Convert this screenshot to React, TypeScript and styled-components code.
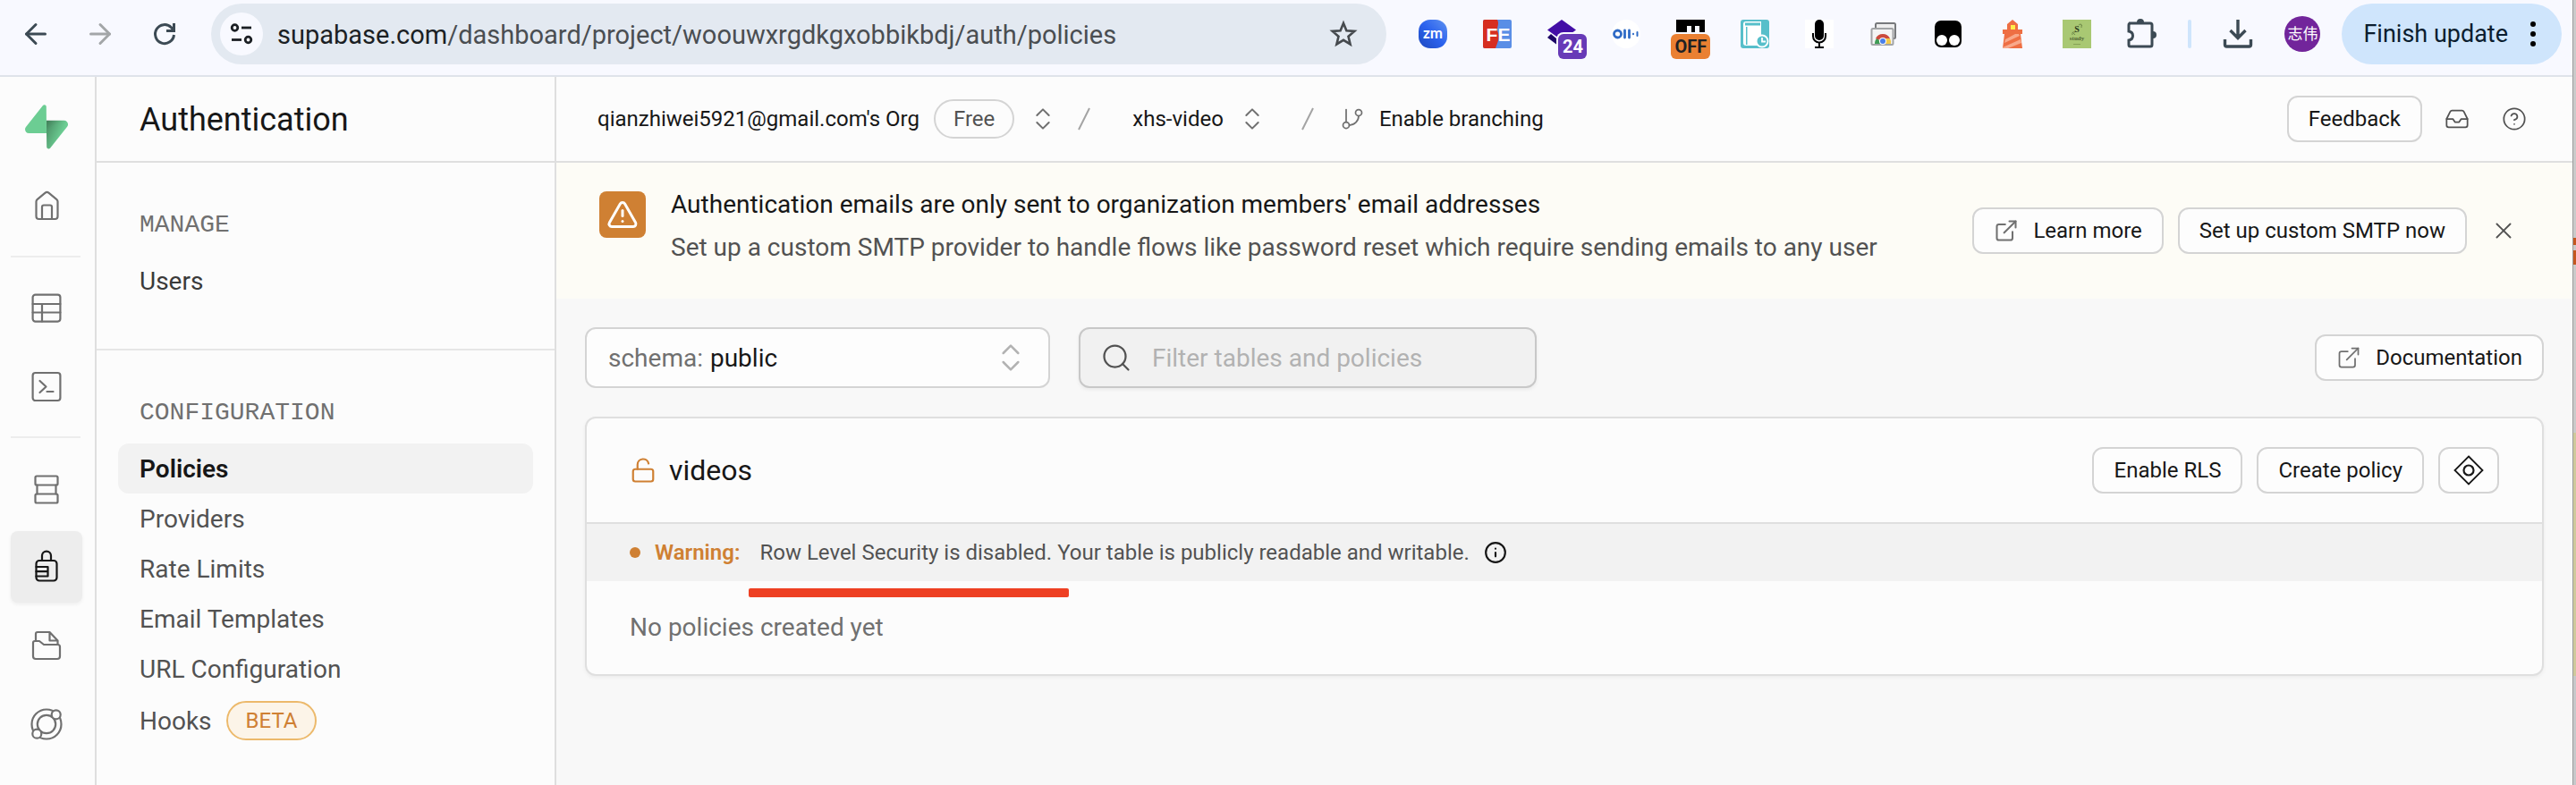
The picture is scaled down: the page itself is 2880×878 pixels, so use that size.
import React from "react";
import styled, { createGlobalStyle, css } from "styled-components";
import {
  ArrowLeft, ArrowRight, ChevronsUpDown, CircleHelp, ExternalLink, GitBranch,
  Inbox, Info, LockOpen, Search, TriangleAlert, X,
} from "lucide-react";

const c = {
  ink: "#171717",
  light: "#525252",
  lighter: "#707070",
  muted: "#b2b2b2",
  surface: "#fcfcfc",
  canvas: "#f8f8f8",
  selected: "#f2f2f2",
  line: "#dfdfdf",
  control: "#d4d4d4",
  warn: "#cf8033",
  chrome: "#f8f9ff",
  chromeInk: "#3c4a54",
};

const Global = createGlobalStyle`
  *, *::before, *::after { box-sizing: border-box; }
  body { margin: 0; background: ${c.canvas}; }
  body, button, input, select {
    font-family: Roboto, "Noto Sans CJK SC", sans-serif;
    font-size: 24px;
    color: ${c.ink};
  }
  button, input, select { margin: 0; padding: 0; border: 0; background: none; }
  button { cursor: pointer; }
  a { color: inherit; text-decoration: none; }
  h1, h2, h3, p, ul { margin: 0; padding: 0; font-weight: 400; }
  ul { list-style: none; }
  svg { display: block; flex: none; }
`;

const Desktop = styled.div`
  display: flex;
  min-height: 100vh;
`;

const Window = styled.div`
  flex: 1;
  min-width: 0;
  display: flex;
  flex-direction: column;
`;

const Backdrop = styled.div`
  width: 4px;
  border-left: 1px solid #9c9c9c;
  background: linear-gradient(
    #cacaca 266px, #c4571f 266px 274px, #cacaca 274px 280px, #c4571f 280px 296px,
    #cacaca 296px 484px, #cfc99c 484px 756px, #c6c8ca 756px
  );
`;

/* ---------- Browser toolbar ---------- */

const BrowserBar = styled.header`
  display: flex;
  align-items: center;
  height: 86px;
  padding: 4px 12px 12px 4px;
  background: ${c.chrome};
  border-bottom: 2px solid #dfe3ea;
`;

const BarButton = styled.button<{ $dim?: boolean }>`
  position: relative;
  display: flex;
  align-items: center;
  justify-content: center;
  width: 72px;
  height: 68px;
  flex: none;
  color: ${(p) => (p.$dim ? "#a3a6a8" : c.chromeInk)};
`;

const AddressBar = styled.div`
  flex: 1;
  min-width: 0;
  display: flex;
  align-items: center;
  gap: 16px;
  height: 68px;
  margin: 0 16px;
  padding: 0 32px 0 10px;
  border-radius: 34px;
  background: #e3e9f1;
`;

const SiteInfo = styled.button`
  display: flex;
  align-items: center;
  justify-content: center;
  width: 48px;
  height: 48px;
  border-radius: 50%;
  background: ${c.chrome};
`;

const Url = styled.p`
  flex: 1;
  padding-top: 2px;
  font-size: 29px;
  color: #4a4e52;
  white-space: nowrap;
  overflow: hidden;
  b { font-weight: 400; color: #1b1f24; }
`;

const Badge = styled.span<{ $bg: string; $fg: string; $wide?: boolean }>`
  position: absolute;
  left: ${(p) => (p.$wide ? 14 : 32)}px;
  top: 34px;
  width: ${(p) => (p.$wide ? 44 : 32)}px;
  height: 28px;
  border-radius: 6px;
  background: ${(p) => p.$bg};
  color: ${(p) => p.$fg};
  font-size: 20px;
  font-weight: 700;
  line-height: 28px;
  text-align: center;
`;

const BarDivider = styled.span`
  width: 4px;
  height: 32px;
  margin: 0 16px;
  border-radius: 2px;
  background: #cfe5fc;
`;

const Avatar = styled.span`
  width: 40px;
  height: 40px;
  border-radius: 50%;
  background: #72259b;
  color: #fff;
  font-size: 17px;
  line-height: 40px;
  text-align: center;
`;

const FinishUpdate = styled.button`
  display: flex;
  align-items: center;
  gap: 18px;
  height: 68px;
  margin-left: 8px;
  padding: 0 22px 0 24px;
  border-radius: 34px;
  background: #cfe5fc;
  color: #0b1d2f;
  font-size: 27px;
  white-space: nowrap;
`;

/* ---------- App frame ---------- */

const Frame = styled.div`
  flex: 1;
  display: flex;
`;

const Rail = styled.nav`
  display: flex;
  flex-direction: column;
  gap: 8px;
  flex: none;
  width: 108px;
  padding: 16px 14px 16px 12px;
  border-right: 2px solid ${c.line};
  background: ${c.surface};
`;

const RailLink = styled.a<{ $active?: boolean }>`
  display: flex;
  align-items: center;
  justify-content: center;
  width: 80px;
  height: 80px;
  border-radius: 8px;
  color: ${c.lighter};
  ${(p) => p.$active && css`
    color: ${c.ink};
    background: #ededed;
    box-shadow: 0 2px 4px rgba(0, 0, 0, 0.06);
  `}
`;

const RailDivider = styled.hr`
  width: 78px;
  height: 2px;
  margin: 8px 0;
  border: 0;
  background: #ededed;
`;

const Sidebar = styled.aside`
  flex: none;
  width: 514px;
  border-right: 2px solid ${c.line};
  background: ${c.surface};
`;

const SidebarHeader = styled.div`
  display: flex;
  align-items: center;
  height: 96px;
  padding: 2px 48px 0;
  border-bottom: 2px solid ${c.line};
  h1 { font-size: 36px; }
`;

const MenuSection = styled.section`
  padding: 48px 24px;
  & + & { border-top: 2px solid #e6e6e6; }
`;

const MenuTitle = styled.h2`
  margin-bottom: 12px;
  padding: 0 24px;
  font-family: "Liberation Mono", monospace;
  font-size: 28px;
  line-height: 44px;
  color: ${c.lighter};
`;

const MenuLink = styled.a<{ $active?: boolean; $strong?: boolean; $tall?: boolean }>`
  display: flex;
  align-items: center;
  gap: 16px;
  height: ${(p) => (p.$tall ? 60 : 56)}px;
  padding: 0 24px;
  border-radius: 12px;
  font-size: 28px;
  font-weight: ${(p) => (p.$active ? 600 : 400)};
  color: ${(p) => (p.$active ? c.ink : p.$strong ? "#3a3a3a" : c.light)};
  background: ${(p) => (p.$active ? c.selected : "none")};
`;

const Pill = styled.span<{ $warn?: boolean }>`
  display: flex;
  align-items: center;
  height: 44px;
  padding: 0 20px;
  border: 2px solid ${(p) => (p.$warn ? "#ecb96b" : c.control)};
  border-radius: 22px;
  background: ${(p) => (p.$warn ? "#fcf4e8" : c.surface)};
  color: ${(p) => (p.$warn ? c.warn : c.light)};
  font-size: 24px;
`;

const Main = styled.main`
  flex: 1;
  min-width: 0;
  background: ${c.canvas};
`;

const TopBar = styled.div`
  display: flex;
  align-items: center;
  height: 96px;
  padding: 0 40px 0 46px;
  border-bottom: 2px solid ${c.line};
  background: ${c.surface};
`;

const Crumb = styled.button<{ $inset?: boolean }>`
  display: flex;
  align-items: center;
  gap: 16px;
  padding: ${(p) => (p.$inset ? "0 16px 0 18px" : "0")};
  white-space: nowrap;
  svg { color: ${c.lighter}; }
`;

const Slash = styled.svg`
  width: 32px;
  height: 32px;
  margin: 0 20px 0 14px;
  stroke: #a3a3a3;
  stroke-width: 2;
`;

const TopActions = styled.div`
  display: flex;
  align-items: center;
  gap: 14px;
  margin-left: auto;
`;

const Button = styled.button<{ $square?: boolean }>`
  display: flex;
  align-items: center;
  justify-content: center;
  gap: 16px;
  height: 52px;
  ${(p) => (p.$square ? "width: 68px;" : "padding: 0 22px;")}
  border: 2px solid ${c.control};
  border-radius: 12px;
  background: #fdfdfd;
  white-space: nowrap;
`;

const LinkButton = styled(Button).attrs({ as: "a", href: "#" })`
  svg { color: ${c.lighter}; }
`;

const GhostButton = styled.button`
  display: flex;
  align-items: center;
  justify-content: center;
  width: 50px;
  height: 52px;
  color: ${c.light};
`;

const Banner = styled.section`
  display: flex;
  align-items: center;
  gap: 28px;
  height: 152px;
  padding: 0 52px 0 48px;
  background: #fdfcf6;
`;

const BannerIcon = styled.div`
  display: flex;
  align-items: center;
  justify-content: center;
  align-self: flex-start;
  width: 52px;
  height: 52px;
  margin-top: 32px;
  border-radius: 8px;
  background: ${c.warn};
  color: #fff;
`;

const BannerText = styled.div`
  flex: 1;
  align-self: flex-start;
  padding-top: 23px;
  font-size: 28px;
  line-height: 48px;
  h2 { font-size: 28px; }
  p { color: ${c.light}; }
`;

const BannerActions = styled.div`
  display: flex;
  align-items: center;
  gap: 16px;
`;

const Content = styled.div`
  display: flex;
  flex-direction: column;
  gap: 32px;
  padding: 32px;
`;

const FilterRow = styled.div`
  display: flex;
  align-items: center;
  gap: 32px;
  & > :last-child { margin-left: auto; }
`;

const Field = styled.label<{ $search?: boolean }>`
  display: flex;
  align-items: center;
  width: ${(p) => (p.$search ? 512 : 520)}px;
  height: 68px;
  gap: ${(p) => (p.$search ? 22 : 8)}px;
  padding: 0 22px 0 ${(p) => (p.$search ? 22 : 24)}px;
  border: 2px solid ${(p) => (p.$search ? "#c8c8c8" : c.control)};
  border-radius: 12px;
  background: ${(p) => (p.$search ? "#f1f1f1" : "#fdfdfd")};
  box-shadow: ${(p) => (p.$search ? "0 2px 4px rgba(0, 0, 0, 0.06)" : "none")};
  color: ${(p) => (p.$search ? c.light : c.lighter)};
  font-size: 28px;
  select, input {
    flex: 1;
    min-width: 0;
    appearance: none;
    outline: none;
    font-size: 28px;
  }
  input::placeholder { color: ${c.muted}; opacity: 1; }
`;

const Card = styled.section`
  position: relative;
  border: 2px solid ${c.line};
  border-radius: 12px;
  background: ${c.surface};
  box-shadow: 0 2px 4px rgba(0, 0, 0, 0.05);
`;

const CardHeader = styled.div`
  display: flex;
  align-items: center;
  gap: 16px;
  height: 118px;
  padding: 0 48px;
  border-bottom: 2px solid ${c.line};
`;

const CardTitle = styled.div`
  flex: 1;
  display: flex;
  align-items: center;
  gap: 14px;
  svg { color: ${c.warn}; }
  h3 { font-size: 32px; }
`;

const CardWarning = styled.div`
  display: flex;
  align-items: center;
  gap: 16px;
  height: 64px;
  padding: 0 48px;
  background: ${c.selected};
  p { color: ${c.light}; }
  strong { margin-right: 6px; font-weight: 600; color: ${c.warn}; }
`;

const Dot = styled.span`
  width: 12px;
  height: 12px;
  border-radius: 50%;
  background: ${c.warn};
`;

const CardBody = styled.p`
  padding: 0 48px;
  font-size: 28px;
  line-height: 104px;
  color: ${c.lighter};
`;

const Underline = styled.span`
  position: absolute;
  left: 181px;
  top: 190px;
  width: 358px;
  height: 10px;
  border-radius: 2px;
  background: #ee4023;
`;

/* ---------- Drawings ---------- */

const RailIcon = ({ children }: { children: React.ReactNode }) => (
  <svg width="40" height="40" viewBox="0 0 40 40" fill="none" stroke="currentColor"
    strokeWidth="2.2" strokeLinecap="round" strokeLinejoin="round" aria-hidden>
    {children}
  </svg>
);

const Logo = () => (
  <svg width="48" height="50" viewBox="0 0 109 113" aria-hidden>
    <defs>
      <linearGradient id="bolt" x1="54" y1="55" x2="94" y2="72" gradientUnits="userSpaceOnUse">
        <stop stopColor="#4b9166" /><stop offset="1" stopColor="#6ccd93" />
      </linearGradient>
      <linearGradient id="shade" x1="36" y1="30.6" x2="54.5" y2="65" gradientUnits="userSpaceOnUse">
        <stop /><stop offset="1" stopOpacity="0" />
      </linearGradient>
    </defs>
    <path d="M63.7 110.3c-2.9 3.6-8.7 1.6-8.7-3L54 40h45.2c8.2 0 12.8 9.5 7.7 15.9z" fill="url(#bolt)" />
    <path d="M63.7 110.3c-2.9 3.6-8.7 1.6-8.7-3L54 40h45.2c8.2 0 12.8 9.5 7.7 15.9z" fill="url(#shade)" fillOpacity=".2" />
    <path d="M45.3 2.1c2.9-3.6 8.7-1.7 8.7 3l.5 67.2H9.8c-8.2 0-12.7-9.5-7.6-15.9z" fill="#6ccd93" />
  </svg>
);

const Ext = ({ children }: { children: React.ReactNode }) => (
  <svg width="32" height="32" viewBox="0 0 32 32" aria-hidden>{children}</svg>
);

const extensions: { name: string; art: React.ReactNode; badge?: React.ReactNode }[] = [
  {
    name: "Zoom",
    art: (
      <Ext>
        <defs>
          <linearGradient id="zm" x1="1" y1="0" x2="0" y2="1">
            <stop stopColor="#5f93f0" /><stop offset=".5" stopColor="#2b62ee" /><stop offset="1" stopColor="#1f49bd" />
          </linearGradient>
        </defs>
        <rect width="32" height="32" rx="13" fill="url(#zm)" />
        <text x="16" y="21" textAnchor="middle" fontFamily="Lato" fontWeight="700" fontSize="17" fill="#fff">zm</text>
      </Ext>
    ),
  },
  {
    name: "FE Helper",
    art: (
      <Ext>
        <rect width="32" height="32" rx="2" fill="#5a8ee6" />
        <path d="M2 0h14c3 6-2 9 1 15 2 6-1 11-3 17H2a2 2 0 0 1-2-2V2a2 2 0 0 1 2-2z" fill="#d62e20" />
        <text x="17" y="24" textAnchor="middle" fontFamily="Liberation Sans" fontWeight="700" fontSize="21" fill="#fff">FE</text>
      </Ext>
    ),
  },
  {
    name: "Layers",
    art: (
      <Ext>
        <path d="M0 20l4-4 12 10v6z" fill="#1d0566" />
        <path d="M16 0l16 11.500-16 11.500L0 11.500z" fill="#430ea6" />
        <path d="M10 32V22a8 8 0 0 1 8-8h14v18z" fill={c.chrome} />
      </Ext>
    ),
    badge: <Badge $bg="#673ab7" $fg="#fff">24</Badge>,
  },
  {
    name: "Audio",
    art: (
      <Ext>
        <circle cx="16" cy="16" r="16" fill="#fff" />
        <g fill="none" stroke="#2f6bc6" strokeWidth="2.800" strokeLinecap="round">
          <circle cx="6.500" cy="16" r="4" />
          <path d="M14.500 12v8M19.500 12v8" />
          <path d="M24 15.800v.400M28.500 14v4" strokeWidth="2" />
        </g>
      </Ext>
    ),
  },
  {
    name: "Switcher",
    art: (
      <Ext>
        <path d="M0 0h32v14h-6V7h-5v7h-4V7h-5v7H0z" fill="#000" />
      </Ext>
    ),
    badge: <Badge $bg="#ea8032" $fg="#202124" $wide>OFF</Badge>,
  },
  {
    name: "Reading list",
    art: (
      <Ext>
        <rect width="32" height="32" rx="3" fill="#57bfca" />
        <path d="M3 5c0-2 1-3 3-3h17v27H6c-2 0-3-1-3-3z" fill="#fff" />
        <path d="M5 3.500h17v3H5zM6 8h1.500v20H6z" fill="#57bfca" />
        <circle cx="24" cy="24" r="6.500" fill="#57bfca" stroke="#fff" strokeWidth="2" />
        <path d="M24 20v4.500h4" fill="none" stroke="#fff" strokeWidth="1.800" />
      </Ext>
    ),
  },
  {
    name: "Voice",
    art: (
      <Ext>
        <rect width="32" height="32" fill="#fff" />
        <rect x="11" y="0" width="10" height="23" rx="5" />
        <path d="M9 15v3.500a7 7 0 0 0 14 0V15M16 26v5M11 31h10" fill="none" stroke="#000" strokeWidth="2" />
      </Ext>
    ),
  },
  {
    name: "Screenshots",
    art: (
      <Ext>
        <rect x="7" y="4" width="22" height="17" rx="1.500" fill="#eee" stroke="#77797c" strokeWidth="2" />
        <rect x="2.500" y="10" width="24" height="18" rx="1.500" fill="#f4f4f4" stroke="#a2a4a6" strokeWidth="2" />
        <path d="M6 27a9 9 0 0 1 3-7l4 7z" fill="#3f9c56" />
        <path d="M7 21a9 9 0 0 1 16 0l-8 3z" fill="#cb4b3d" />
        <path d="M15 21h8a9 9 0 0 1 1 6h-9z" fill="#f2c94a" />
        <circle cx="15" cy="24" r="4" fill="#fff" />
        <circle cx="15" cy="24" r="3" fill="#4a80ea" />
      </Ext>
    ),
  },
  {
    name: "Userscripts",
    art: (
      <Ext>
        <rect x="1" y="1" width="30" height="30" rx="7" />
        <circle cx="9" cy="23" r="6" fill="#fff" />
        <circle cx="23" cy="23" r="6" fill="#fff" />
      </Ext>
    ),
  },
  {
    name: "Lighthouse",
    art: (
      <Ext>
        <path d="M16 0l6 5v6h5v5h-2l2 16H5l2-16H5v-5h5V5z" fill="#ee6f43" />
        <path d="M14 6h5v5h-5z" fill="#fff04a" />
        <path d="M8 22l11-6h4l1 2L7 26zM5 31l20-9 1 4L11 32H5z" fill="#f8a98a" />
      </Ext>
    ),
  },
  {
    name: "Study",
    art: (
      <Ext>
        <rect width="32" height="32" fill="#a9c873" />
        <path d="M18 6q4-3 3 3M20 5l2 2M11 17q-1-4 3-3M11 14l3 3" fill="none" stroke="#6f8a4a" />
        <text x="16" y="14" textAnchor="middle" fontFamily="Liberation Serif" fontWeight="700" fontSize="10" fill="#2e3a1e">S</text>
        <text x="16" y="23" textAnchor="middle" fontFamily="Liberation Serif" fontWeight="700" fontSize="7" fill="#4f6234">study</text>
        <path d="M12 27.500h8" stroke="#86a256" />
      </Ext>
    ),
  },
  {
    name: "Extensions",
    art: (
      <svg width="36" height="36" viewBox="0 0 36 36" fill="none" aria-hidden>
        <path d="M4 6h24a2 2 0 0 1 2 2v22a2 2 0 0 1-2 2H6a2 2 0 0 1-2-2v-5c6-1 6-9 0-10V8a2 2 0 0 1 2-2z" stroke={c.chromeInk} strokeWidth="3" />
        <path d="M13 5a4 4 0 0 1 8 0zM31 15a4 4 0 0 1 0 8z" fill={c.chromeInk} />
      </svg>
    ),
  },
];

export default function App() {
  return (
    <>
      <Global />
      <Desktop>
        <Window>
          <BrowserBar>
            <BarButton aria-label="Back"><ArrowLeft size={36} strokeWidth={2} /></BarButton>
            <BarButton aria-label="Forward" $dim><ArrowRight size={36} strokeWidth={2} /></BarButton>
            <BarButton aria-label="Reload">
              <svg width="32" height="32" viewBox="0 0 32 32" fill="none" stroke="currentColor" strokeWidth="3" aria-hidden>
                <path d="M26.500 17A10.500 10.500 0 1 1 23.500 8.700L26 11.500" />
                <path d="M26.500 4v8.500H18" />
              </svg>
            </BarButton>
            <AddressBar>
              <SiteInfo aria-label="Site information">
                <svg width="28" height="28" viewBox="0 0 28 28" fill="none" stroke="#1b1f24" strokeWidth="2.800" aria-hidden>
                  <circle cx="6.500" cy="7" r="3.300" /><path d="M14 7h11" />
                  <circle cx="21.500" cy="20.500" r="3.300" /><path d="M3 20.500h11" />
                </svg>
              </SiteInfo>
              <Url><b>supabase.com</b>/dashboard/project/woouwxrgdkgxobbikbdj/auth/policies</Url>
              <svg width="32" height="32" viewBox="0 0 32 32" fill="none" stroke="#45494d" strokeWidth="2.600" aria-label="Bookmark this tab">
                <path d="M16 4l3.400 8.200 8.900.700-6.800 5.800 2.100 8.700L16 22.800l-7.600 4.600 2.100-8.700-6.800-5.800 8.900-.700z" />
              </svg>
            </AddressBar>
            {extensions.map((e) => (
              <BarButton key={e.name} aria-label={e.name}>{e.art}{e.badge}</BarButton>
            ))}
            <BarDivider />
            <BarButton aria-label="Downloads">
              <svg width="36" height="36" viewBox="0 0 36 36" fill="none" stroke="currentColor" strokeWidth="3.400" aria-hidden>
                <path d="M18 2v20M9.500 14l8.500 8.500 8.500-8.500M3.500 24v6a2 2 0 0 0 2 2h25a2 2 0 0 0 2-2v-6" />
              </svg>
            </BarButton>
            <BarButton aria-label="Profile"><Avatar>志伟</Avatar></BarButton>
            <FinishUpdate>
              Finish update
              <svg width="20" height="32" viewBox="0 0 20 32" aria-hidden>
                <circle cx="10" cy="5" r="3" /><circle cx="10" cy="16" r="3" /><circle cx="10" cy="27" r="3" />
              </svg>
            </FinishUpdate>
          </BrowserBar>

          <Frame>
            <Rail aria-label="Project">
              <RailLink href="#" aria-label="Dashboard"><Logo /></RailLink>
              <RailLink href="#" aria-label="Home">
                <RailIcon>
                  <path d="M8.500 15.500V32a3 3 0 0 0 3 3h18a3 3 0 0 0 3-3V15.500a3 3 0 0 0-1.100-2.300L22.400 5.700a3 3 0 0 0-3.800 0l-9 7.500a3 3 0 0 0-1.100 2.300z" />
                  <path d="M15 35V21.500a2 2 0 0 1 2-2h7a2 2 0 0 1 2 2V35" />
                </RailIcon>
              </RailLink>
              <RailDivider />
              <RailLink href="#" aria-label="Table Editor">
                <RailIcon><rect x="4.600" y="5.600" width="30.800" height="30" rx="3" /><path d="M4.600 16h30.800M4.600 25.500h30.800M15 16v19.500" /></RailIcon>
              </RailLink>
              <RailLink href="#" aria-label="SQL Editor">
                <RailIcon><rect x="4.600" y="5" width="30.800" height="31" rx="3" /><path d="M12.500 14l7 6.500-7 6.500M20.500 26h7" /></RailIcon>
              </RailLink>
              <RailDivider />
              <RailLink href="#" aria-label="Database">
                <RailIcon><rect x="7.500" y="6.500" width="25" height="10" rx="1.500" /><path d="M9.500 16.500v10M30.500 16.500v10" /><rect x="7.500" y="26.500" width="25" height="10" rx="1.500" /></RailIcon>
              </RailLink>
              <RailLink href="#" aria-label="Authentication" $active>
                <RailIcon><rect x="8.500" y="13" width="23" height="22.500" rx="3.500" /><path d="M15 13V7.600a5 5 0 0 1 10 0V13M8.500 20h13v10.500h-13M8.500 25.200h13" /></RailIcon>
              </RailLink>
              <RailLink href="#" aria-label="Storage">
                <RailIcon>
                  <path d="M8 15V7a2 2 0 0 1 2-2h13.500l9 9.500V19M23.500 5v9.500h9" />
                  <path d="M5 17a2 2 0 0 1 2-2h5l5 4h15.500a2.500 2.500 0 0 1 2.500 2.500V32a3 3 0 0 1-3 3H8a3 3 0 0 1-3-3z" />
                </RailIcon>
              </RailLink>
              <RailLink href="#" aria-label="Realtime">
                <RailIcon>
                  <circle cx="20" cy="20" r="16.500" /><circle cx="20" cy="20" r="10.200" />
                  <circle cx="30.700" cy="9.300" r="5" fill={c.surface} /><circle cx="9.300" cy="30.700" r="5" fill={c.surface} />
                </RailIcon>
              </RailLink>
            </Rail>

            <Sidebar>
              <SidebarHeader><h1>Authentication</h1></SidebarHeader>
              <MenuSection>
                <MenuTitle>MANAGE</MenuTitle>
                <MenuLink href="#" $strong>Users</MenuLink>
              </MenuSection>
              <MenuSection>
                <MenuTitle>CONFIGURATION</MenuTitle>
                <ul>
                  <li><MenuLink href="#" $active aria-current="page">Policies</MenuLink></li>
                  <li><MenuLink href="#">Providers</MenuLink></li>
                  <li><MenuLink href="#">Rate Limits</MenuLink></li>
                  <li><MenuLink href="#">Email Templates</MenuLink></li>
                  <li><MenuLink href="#">URL Configuration</MenuLink></li>
                  <li><MenuLink href="#" $tall>Hooks <Pill $warn>BETA</Pill></MenuLink></li>
                </ul>
              </MenuSection>
            </Sidebar>

            <Main>
              <TopBar>
                <Crumb>
                  qianzhiwei5921@gmail.com's Org
                  <Pill>Free</Pill>
                  <ChevronsUpDown size={32} strokeWidth={1.5} />
                </Crumb>
                <Slash viewBox="0 0 32 32" aria-hidden><path d="M10 28L22 4" /></Slash>
                <Crumb $inset>
                  xhs-video
                  <ChevronsUpDown size={32} strokeWidth={1.5} />
                </Crumb>
                <Slash viewBox="0 0 32 32" aria-hidden><path d="M10 28L22 4" /></Slash>
                <Crumb>
                  <GitBranch size={28} strokeWidth={1.5} />
                  Enable branching
                </Crumb>
                <TopActions>
                  <Button>Feedback</Button>
                  <GhostButton aria-label="Notifications"><Inbox size={28} strokeWidth={1.5} /></GhostButton>
                  <GhostButton aria-label="Help"><CircleHelp size={28} strokeWidth={1.5} /></GhostButton>
                </TopActions>
              </TopBar>

              <Banner>
                <BannerIcon><TriangleAlert size={36} strokeWidth={2} /></BannerIcon>
                <BannerText>
                  <h2>Authentication emails are only sent to organization members' email addresses</h2>
                  <p>Set up a custom SMTP provider to handle flows like password reset which require sending emails to any user</p>
                </BannerText>
                <BannerActions>
                  <LinkButton><ExternalLink size={28} strokeWidth={1.75} />Learn more</LinkButton>
                  <Button>Set up custom SMTP now</Button>
                  <GhostButton aria-label="Dismiss"><X size={30} strokeWidth={1.5} /></GhostButton>
                </BannerActions>
              </Banner>

              <Content>
                <FilterRow>
                  <Field>
                    schema:
                    <select defaultValue="public"><option>public</option></select>
                    <ChevronsUpDown size={40} strokeWidth={1.5} color={c.muted} />
                  </Field>
                  <Field $search>
                    <Search size={36} strokeWidth={1.5} />
                    <input type="search" placeholder="Filter tables and policies" aria-label="Filter tables and policies" />
                  </Field>
                  <LinkButton><ExternalLink size={28} strokeWidth={1.5} />Documentation</LinkButton>
                </FilterRow>

                <Card>
                  <CardHeader>
                    <CardTitle>
                      <LockOpen size={30} strokeWidth={1.75} />
                      <h3>videos</h3>
                    </CardTitle>
                    <Button>Enable RLS</Button>
                    <Button>Create policy</Button>
                    <Button $square aria-label="Ask the assistant">
                      <svg width="36" height="36" viewBox="0 0 36 36" fill="none" stroke="currentColor" aria-hidden>
                        <path d="M18 2.500L33.500 18 18 33.500 2.500 18z" strokeWidth="1.800" />
                        <circle cx="18" cy="18" r="5.500" strokeWidth="2.200" />
                      </svg>
                    </Button>
                  </CardHeader>
                  <CardWarning>
                    <Dot />
                    <strong>Warning:</strong>
                    <p>Row Level Security is disabled. Your table is publicly readable and writable.</p>
                    <Info size={26} strokeWidth={2} />
                  </CardWarning>
                  <CardBody>No policies created yet</CardBody>
                  <Underline />
                </Card>
              </Content>
            </Main>
          </Frame>
        </Window>
        <Backdrop />
      </Desktop>
    </>
  );
}
